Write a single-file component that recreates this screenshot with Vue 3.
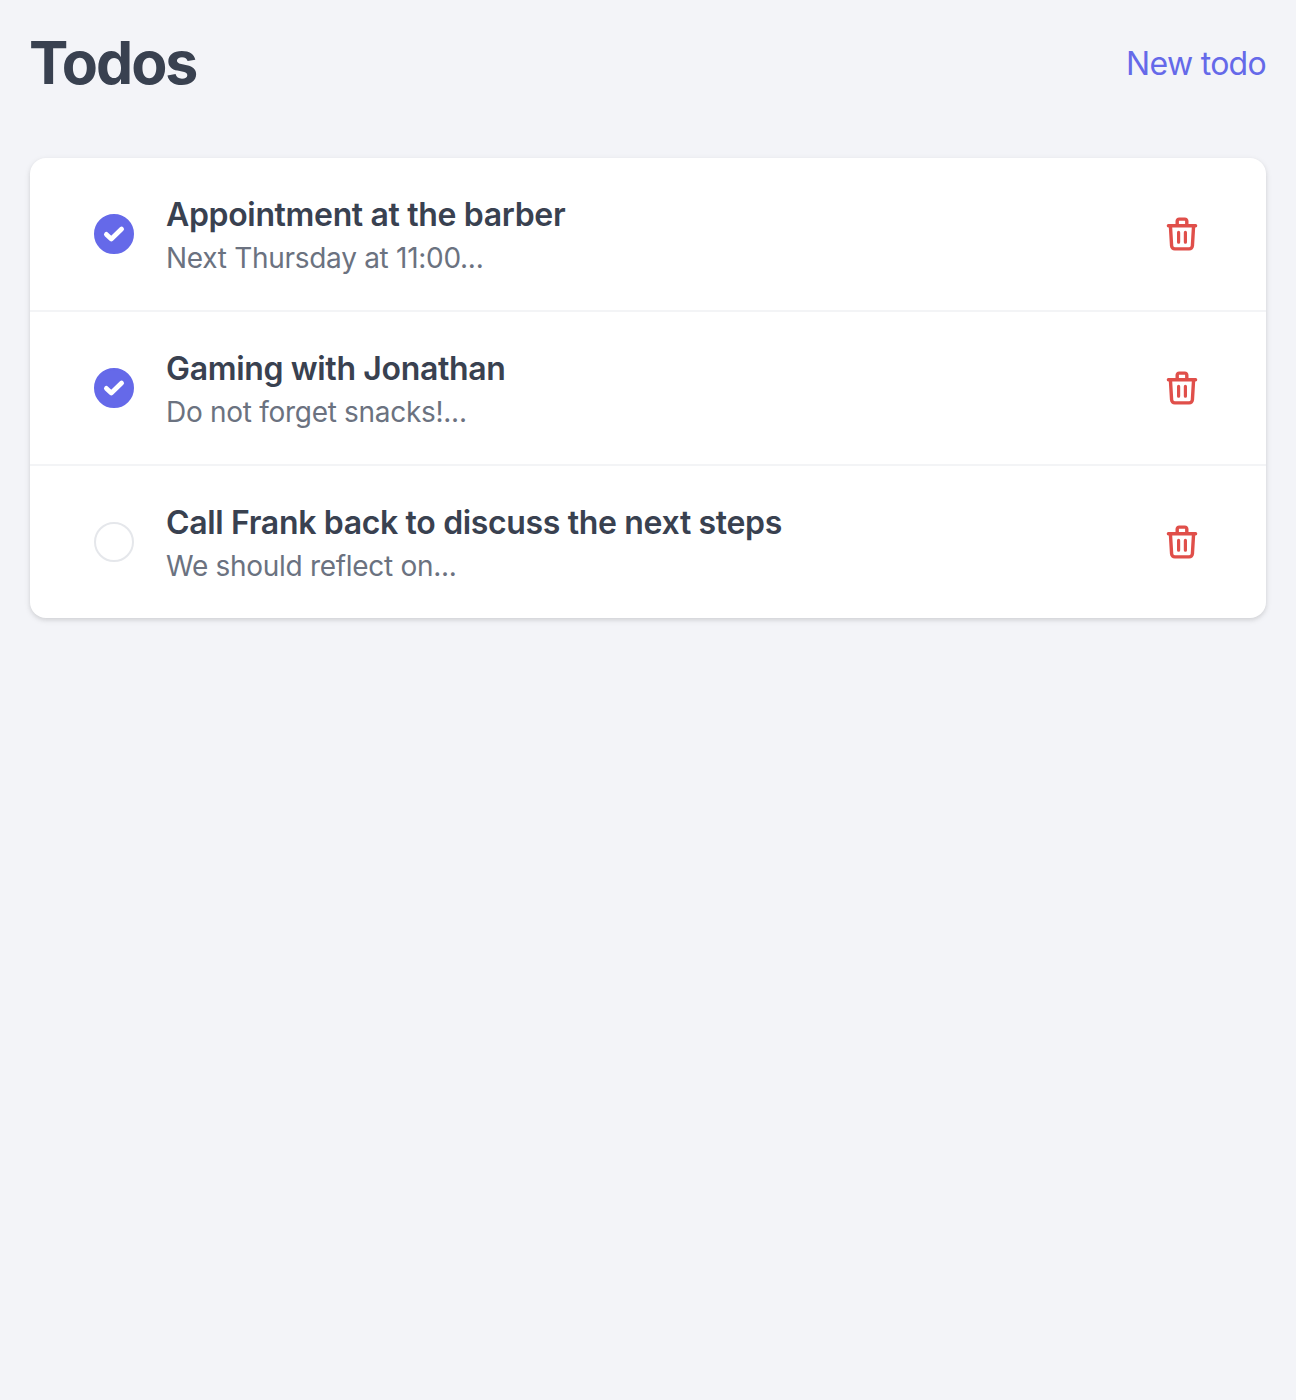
<script setup>
const todos = [
  { title: 'Appointment at the barber', note: 'Next Thursday at 11:00...', done: true },
  { title: 'Gaming with Jonathan', note: 'Do not forget snacks!...', done: true },
  { title: 'Call Frank back to discuss the next steps', note: 'We should reflect on...', done: false },
]
</script>

<template>
  <main class="page">
    <header class="header">
      <h1>Todos</h1>
      <a class="new">New todo</a>
    </header>
    <ul class="list">
      <li v-for="todo in todos" :key="todo.title" class="row">
        <span class="check" :class="{ done: todo.done }">
          <svg v-if="todo.done" width="24" height="24" viewBox="0 0 24 24" fill="none" stroke="#fff" stroke-width="4.8" stroke-linecap="round" stroke-linejoin="round"><path d="M4.4 12.4 9.3 16.9 19.6 7.1" /></svg>
        </span>
        <div class="body">
          <div class="title">{{ todo.title }}</div>
          <div class="note">{{ todo.note }}</div>
        </div>
        <svg class="trash" width="40" height="40" viewBox="0 0 40 40" fill="none" stroke="#e04f4a" stroke-width="3.4" stroke-linecap="round" stroke-linejoin="round">
          <path d="M6.4 11.7h27.2M15.2 11.7V7A1.9 1.9 0 0 1 17.1 5.1h5.8A1.9 1.9 0 0 1 24.8 7v4.7M8.4 11.7 9.6 31.8a3.2 3.2 0 0 0 3.2 3.1h14.4a3.2 3.2 0 0 0 3.2-3.1l1.2-20.1" />
          <path stroke-width="3.2" d="M16.6 18.4v9.8M23.4 18.4v9.8" />
        </svg>
      </li>
    </ul>
  </main>
</template>

<style>
body { background: #f3f4f8; }
</style>
<style scoped>
.page { box-sizing: border-box; min-height: 1400px; padding: 30px; font-family: Inter, "Liberation Sans", sans-serif; color: #394150; }
.header { display: flex; align-items: center; justify-content: space-between; height: 68px; }
h1 { margin: 0 0 3px -1px; font-size: 59px; line-height: 65px; font-weight: 700; letter-spacing: -2px; }
.new { margin-bottom: 1px; font-size: 32px; line-height: 46px; letter-spacing: -.7px; color: #6569e9; }
.list { list-style: none; margin: 60px 0 0; padding: 0; background: #fff; border-radius: 16px; box-shadow: 0 2px 6px rgba(0,0,0,.1), 0 2px 4px rgba(0,0,0,.06); }
.row { display: flex; align-items: center; height: 152px; padding: 0 64px; }
.row + .row { border-top: 2px solid #f3f4f6; }
.check { box-sizing: border-box; width: 40px; height: 40px; border: 2px solid #e5e7eb; border-radius: 50%; display: flex; align-items: center; justify-content: center; }
.done { background: #6569e9; border-color: #6569e9; }
.body { flex: 1; margin-left: 32px; white-space: nowrap; }
.title { padding-top: 2px; font-size: 32px; line-height: 46px; font-weight: 600; letter-spacing: -.34px; }
.note { font-size: 28px; line-height: 40px; letter-spacing: -.29px; color: #6b7280; }
</style>
